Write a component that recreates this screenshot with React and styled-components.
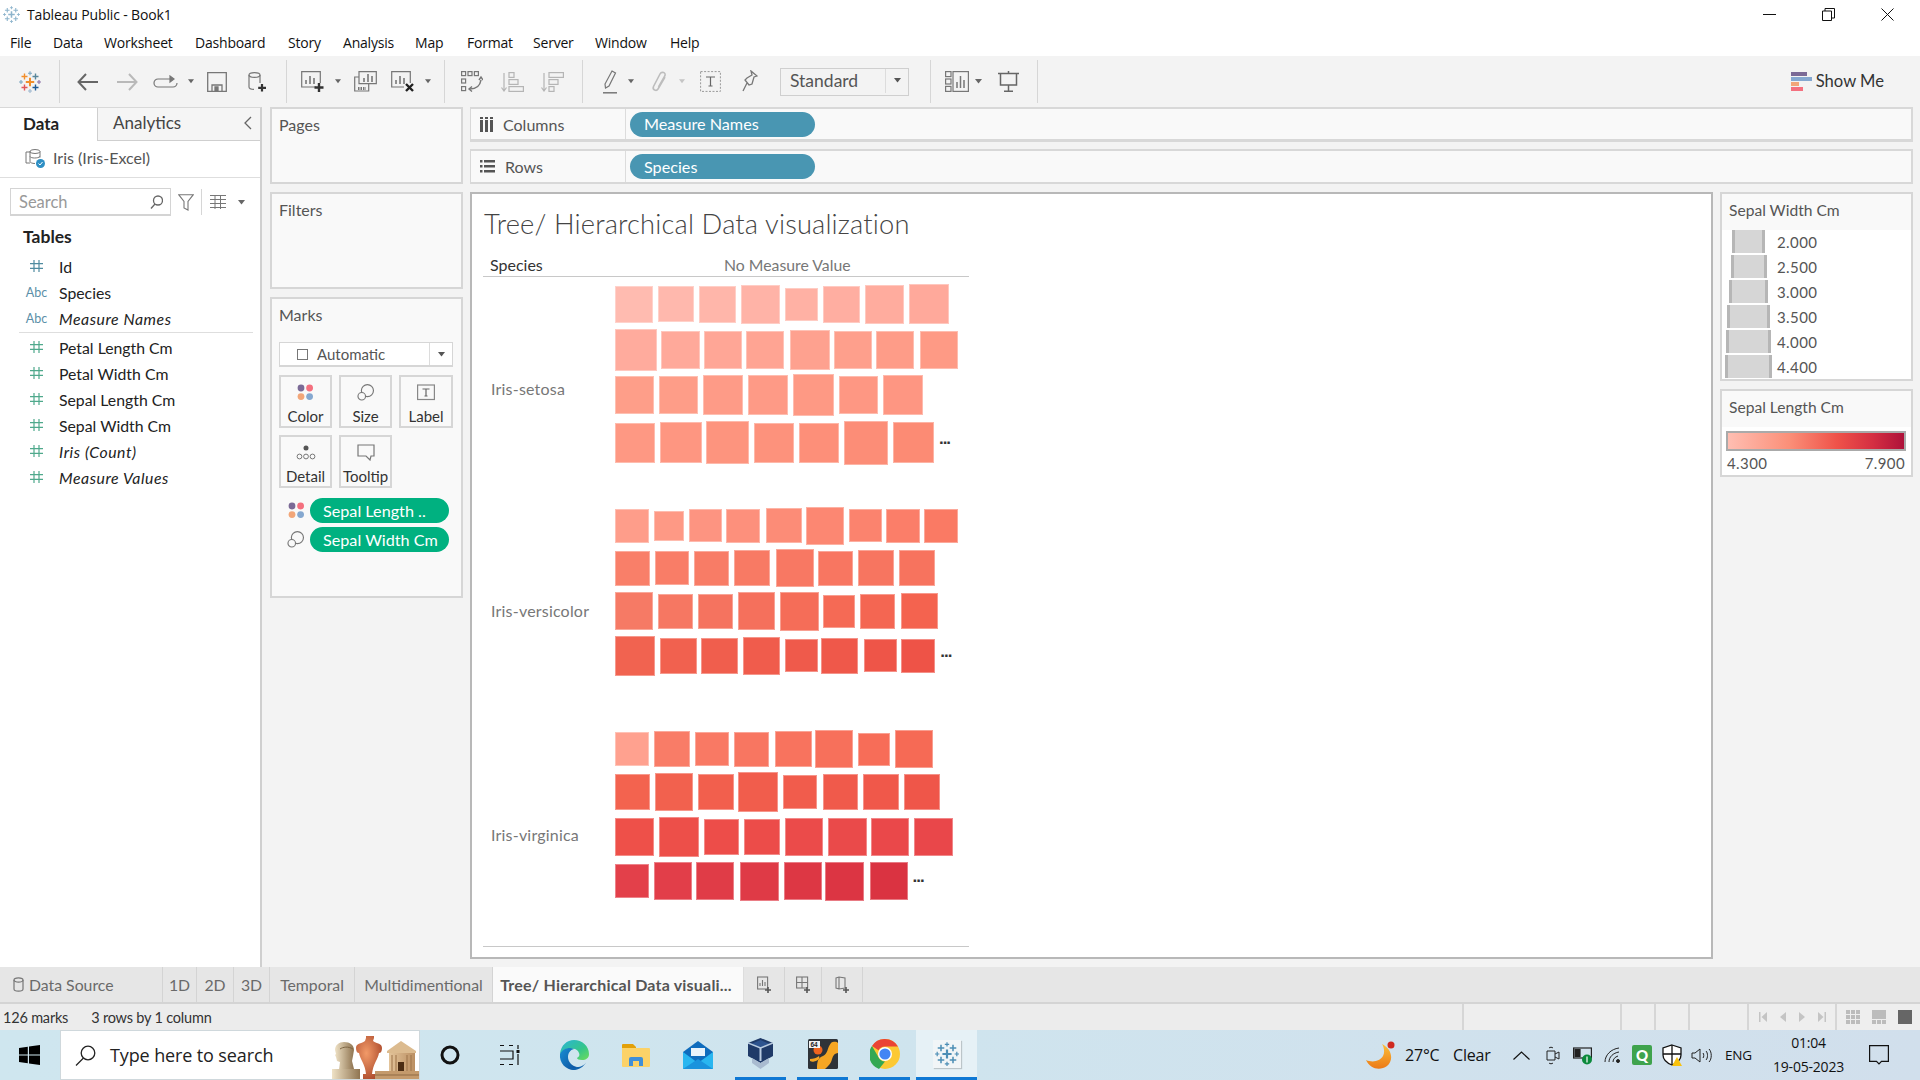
import React from "react";
import styled, { createGlobalStyle } from "styled-components";

const Global = createGlobalStyle`
  html, body { margin: 0; padding: 0; background: #fff; overflow: hidden; }
  #root { width: 1920px; height: 1080px; }
  * { box-sizing: border-box; }
`;
const UI = `"Lato", "Open Sans", sans-serif`;
const WIN = `"Open Sans", "Noto Sans", sans-serif`;

const Page = styled.div`
  width: 1920px; height: 1080px; display: flex; flex-direction: column; overflow: hidden;
  background: #f3f3f3; font-family: ${UI}; color: #333;
`;
/* ---------- window chrome ---------- */
const TitleBar = styled.div`
  height: 28px; background: #fff; display: flex; align-items: center; padding-left: 3px;
  font: 14px ${WIN}; color: #111; flex: none; letter-spacing: -0.15px;
`;
const TitleText = styled.span` margin-left: 7px; `;
const WindowButtons = styled.div` margin-left: auto; display: flex; margin-right: 26px; gap: 46px; align-items: center; `;
const MenuBar = styled.div`
  height: 28px; background: #fff; display: flex; align-items: center; flex: none;
  font: 14px ${WIN}; color: #111; letter-spacing: -0.2px; padding-left: 10px;
`;
const MenuItem = styled.span` width: ${p => p.$w}px; flex: none; `;

const Toolbar = styled.div`
  height: 51px; background: #f3f3f3; display: flex; align-items: center; flex: none; padding-left: 19px;
`;
const Tool = styled.span`
  display: inline-flex; align-items: center; justify-content: center; flex: none;
  width: ${p => p.$w}px; margin-left: ${p => p.$ml || 0}px;
`;
const Sep = styled.span` width: 1px; height: ${p => p.$h || 43}px; background: #d6d6d6; flex: none; margin-left: ${p => p.$ml}px; `;
const Select = styled.div`
  width: 129px; height: 28px; margin-left: 22px; border: 1px solid #cfcfcf; display: flex; flex: none; align-items: center;
  font: 17.5px ${UI}; color: #555; padding: 0 0 2px 9px;
`;
const SelectArrow = styled.span`
  margin-left: auto; width: 23px; height: 100%; border-left: 1px solid #dcdcdc; display: flex; align-items: center; justify-content: center;
`;
const ShowMe = styled.div`
  margin-left: auto; margin-right: 36px; display: flex; align-items: center; gap: 4px; font: 16.6px ${UI}; color: #333; line-height: 20px; padding-bottom: 1px;
`;
/* ---------- main ---------- */
const Main = styled.div` flex: 1; display: flex; min-height: 0; `;
const DataPane = styled.div`
  width: 262px; background: #fff; border-right: 2px solid #cfcfcf; border-top: 1px solid #d8d8d8; flex: none; display: flex; flex-direction: column;
`;
const TabRow = styled.div` display: flex; height: 33px; flex: none; `;
const PaneTab = styled.div`
  width: 97px; font: 700 17px ${UI}; color: #222; padding: 0 0 3px 23px;
  display: flex; align-items: center; background: #fff;
`;
const InactiveTab = styled.div`
  flex: 1; background: #f5f5f5; border-left: 1px solid #cfcfcf; border-bottom: 1px solid #cfcfcf;
  display: flex; align-items: center; padding: 0 8px 3px 15px; font: 17px ${UI}; color: #444; justify-content: space-between;
`;
const SourceRow = styled.div`
  height: 37px; display: flex; align-items: center; padding: 0 0 3px 25px; gap: 8px; border-bottom: 1px solid #dedede; font: 16px ${UI}; color: #555; flex: none;
`;
const SearchRow = styled.div` display: flex; align-items: center; margin: 10px 0 0 10px; height: 28px; flex: none; `;
const SearchBox = styled.div`
  width: 161px; height: 28px; border: 1px solid #d4d4d4; border-bottom-width: 2px; display: flex; align-items: center; justify-content: space-between;
  padding: 0 7px 0 8px; font: 16.5px ${UI}; color: #999;
`;
const Tables = styled.div` font: 700 17.5px ${UI}; color: #222; margin: 11px 0 6px 23px; height: 20px; line-height: 20px; flex: none; `;
const Field = styled.div`
  height: 26px; display: flex; align-items: center; font: ${p => p.$i ? "italic " : ""}15.8px ${UI}; letter-spacing: ${p => p.$i ? ".55px" : "0"}; color: #222; flex: none;
  padding-left: 26px;
`;
const FieldLabel = styled.span` margin-left: 12px; `;
const TypeIcon = styled.span`
  width: 21px; flex: none; font: 12.5px ${UI}; font-style: normal; letter-spacing: 0; color: ${p => p.$c}; display: inline-flex; justify-content: center;
`;
const FieldRule = styled.div` height: 1px; background: #dedede; margin: 1px 7px 1px 19px; flex: none; `;

const Cards = styled.div` width: 193px; margin-left: 8px; flex: none; display: flex; flex-direction: column; `;
const Card = styled.div`
  height: ${p => p.$h}px; margin-top: ${p => p.$mt || 0}px; border: 2px solid #d6d6d6; background: #f9f9f9; padding: 6px 0 0 7px; font: 16px ${UI}; color: #555; flex: none;
`;
const CardTitle = styled.div` height: 20px; line-height: 20px; `;
const MarkType = styled.div`
  width: 174px; height: 25px; margin: 17px 0 0 0; border: 1px solid #d6d6d6; border-bottom-width: 2px; background: #fff; display: flex; align-items: center;
  font: 15px ${UI}; color: #555; padding-left: 17px;
`;
const CheckBox = styled.span` width: 11px; height: 11px; border: 1px solid #777; flex: none; margin-right: 9px; `;
const MarkGrid = styled.div` display: grid; grid-template-columns: 53px 53px 54px; grid-auto-rows: 53px; gap: 7px 7px; margin-top: 8px; `;
const MarkBtn = styled.div`
  border: 2px solid #d6d6d6; display: flex; flex-direction: column; align-items: center; font: 15px ${UI}; color: #333; padding-top: 7px;
  line-height: 16px; gap: 7px; white-space: nowrap;
`;
const Pills = styled.div` margin-top: 10px; display: flex; flex-direction: column; gap: 4px; `;
const PillRow = styled.div` display: flex; align-items: center; padding-left: 8px; `;
const PillIcon = styled.span` width: 18px; margin-right: 5px; flex: none; display: inline-flex; justify-content: center; `;
const Pill = styled.div`
  width: ${p => p.$w}px; height: 25px; border-radius: 13px; background: ${p => p.$c}; color: #fff; display: flex; align-items: center;
  padding-left: ${p => p.$pl}px; font: 16.2px ${UI}; flex: none; white-space: nowrap; overflow: hidden; padding-bottom: 1px;
`;
const Workspace = styled.div` flex: none; width: 1443px; margin-left: 7px; display: flex; flex-direction: column; `;
const Shelf = styled.div`
  height: ${p => p.$h}px; margin-bottom: ${p => p.$mb}px; border: 2px solid #d8d8d8; border-bottom-width: ${p => p.$bb}px; border-left-width: 1px; background: #f9f9f9; display: flex; align-items: center; flex: none;
`;
const ShelfLabel = styled.div`
  width: 155px; height: 100%; border-right: 1px solid #dcdcdc; display: flex; align-items: center; padding-left: 9px; gap: 10px; font: 16px ${UI}; color: #555; margin-right: 4px;
`;
const ContentRow = styled.div` flex: 1; display: flex; gap: 7px; min-height: 0; `;
const Viz = styled.div`
  width: 1243px; height: 767px; border: 2px solid #b8b8b8; background: #fff; flex: none; padding: 0 0 0 11px;
`;
const VizTitle = styled.div`
  font: 300 27.3px ${UI}; color: #444; height: 63px; padding: 14px 0 0 1px; line-height: 32px; letter-spacing: 0.15px; white-space: nowrap;
`;
const VizTable = styled.div` width: 486px; `;
const VizHeader = styled.div`
  height: 18px; margin-bottom: 1px; border-bottom: 1px solid #c8c8c8; box-sizing: content-box; padding-bottom: 1px; display: grid; grid-template-columns: 242px 1fr; font: 16px ${UI};
  color: #333;
`;
const HeaderName = styled.div` padding-left: 7px; line-height: 16px; `;
const HeaderValue = styled.div` color: #777; font-size: 15.8px; line-height: 16px; margin-left: -1px; white-space: nowrap; `;
const PaneBlock = styled.div` height: ${p => p.$h}px; display: grid; grid-template-columns: 132px 1fr; `;
const SpeciesLabel = styled.div` display: flex; align-items: center; padding: 0 0 ${p => p.$pb}px 8px; font: 16px ${UI}; color: #777; letter-spacing: .2px; `;
const MarksCol = styled.div` display: flex; flex-direction: column; min-width: 0; `;
const MarkRow = styled.div` height: 44px; display: flex; align-items: center; flex: none; `;
const TreeMark = styled.div`
  flex: none; box-shadow: inset 0 0 0 1px rgba(255,255,255,.35);
`;
const More = styled.span` font: 700 17px/1 "Liberation Sans", sans-serif; color: #333; margin-left: 5px; padding-bottom: 9px; letter-spacing: -1px; `;
const VizFoot = styled.div` border-top: 1px solid #c8c8c8; `;
const Legends = styled.div` width: 193px; flex: none; display: flex; flex-direction: column; gap: 8px; `;
const Legend = styled.div` height: ${p => p.$h}px; border: 2px solid #d6d6d6; background: #fff; flex: none; `;
const LegendTitle = styled.div`
  height: ${p => p.$h}px; background: #f9f9f9; padding: 0 0 4px 7px; display: flex; align-items: center; font: 15.6px ${UI}; color: #555;
`;
const SizeList = styled.div` margin-top: -1px; `;
const SizeItem = styled.div` height: 25px; display: flex; align-items: center; font: 15px ${UI}; color: #555; letter-spacing: .4px; `;
const SwatchCell = styled.div` width: 55px; display: flex; justify-content: center; padding-right: 2px; flex: none; `;
const Swatch = styled.div` width: ${p => p.$w}px; height: 23px; background: #d6d6d6; border-left: 3px solid #b6b6b6; border-right: 3px solid #b6b6b6; `;
const Ramp = styled.div`
  height: 20px; margin: 4px 5px 0 4px; border: 2px solid #aaa; background: linear-gradient(90deg,#ffbeb2 0%,#fb8f78 35%,#ef5249 62%,#d52f42 82%,#ae123a 100%);
`;
const RampLabels = styled.div` display: flex; justify-content: space-between; margin: 3px 6px 0 5px; font: 15px ${UI}; color: #555; letter-spacing: .4px; `;
/* ---------- tabs / status ---------- */
const TabBar = styled.div` height: 37px; flex: none; background: #e6e6e6; display: flex; border-bottom: 2px solid #d4d4d4; `;
const SheetTab = styled.div`
  width: ${p => p.$w}px; flex: none; display: flex; align-items: center; justify-content: ${p => p.$left ? "flex-start" : "center"};
  border-right: 1px solid #d4d4d4; font: 15.8px ${UI}; color: #6a6a6a; gap: 5px; padding-left: ${p => p.$left ? 13 : 0}px; white-space: nowrap;
`;
const ActiveSheet = styled(SheetTab)` background: #fafafa; color: #555; font-weight: 700; font-size: 16px; border-right: 1px solid #ddd; letter-spacing: .2px; padding-right: 4px; `;
const StatusBar = styled.div` height: 26px; flex: none; background: #ececec; display: flex; align-items: center; font: 14.5px ${UI}; color: #333; `;
const StatusText = styled.span` margin-left: ${p => p.$ml}px; white-space: nowrap; letter-spacing: -.2px; `;
const StatusCell = styled.div`
  width: ${p => p.$w}px; height: 100%; border-left: 2px solid #d6d6d6; display: flex; align-items: center; justify-content: center; gap: ${p => p.$gap || 0}px; flex: none;
`;
const StatusRight = styled.div` margin-left: auto; display: flex; height: 100%; background: #eeeeee; `;
/* ---------- taskbar ---------- */
const Taskbar = styled.div`
  height: 50px; flex: none; background: linear-gradient(90deg,#cfe6ef 0%,#cfe4ee 50%,#d1dfec 100%); display: flex; align-items: center; font: 14px ${WIN}; color: #111;
`;
const StartCell = styled.div` width: 60px; height: 100%; display: flex; align-items: center; padding-left: 19px; flex: none; `;
const SearchBar = styled.div`
  width: 360px; height: 50px; background: #fff; border: 1px solid #cfd8dc; display: flex; align-items: center; padding-left: 14px; font: 18px ${WIN}; color: #222; position: relative; flex: none; overflow: hidden; letter-spacing: -.12px;
`;
const SearchArt = styled.span` position: absolute; right: 0; bottom: 0; display: flex; `;
const SearchText = styled.span` margin-left: 14px; `;
const TaskCell = styled.div`
  height: 50px; width: ${p => p.$w}px; margin-left: ${p => p.$ml || 0}px; flex: none; display: flex; align-items: center; justify-content: center;
  border-bottom: ${p => p.$run ? "3px solid #0f78d4" : "none"}; background: ${p => p.$act ? "#e6f1f6" : "transparent"}; padding-top: ${p => p.$run ? 1 : 0}px;
`;
const AppTile = styled.span`
  width: 28px; height: 28px; background: #f1f5f7; box-shadow: 1px 1px 1px rgba(0,0,0,.18); display: flex; align-items: center; justify-content: center;
`;
const TrayText = styled.span`
  margin-left: ${p => p.$ml}px; width: ${p => p.$w}px; flex: none; font-size: ${p => p.$fs || 16}px; white-space: nowrap; letter-spacing: -.2px;
`;
const Clock = styled.div` margin-left: 19px; width: 73px; flex: none; text-align: center; font-size: 14px; line-height: 24px; letter-spacing: -.2px; white-space: nowrap; `;

/* ---------- drawings ---------- */
const G = "#666";
const Cross = ({ x, y, s = 3, c, w = 1.4 }) => <path d={`M${x - s} ${y}H${x + s}M${x} ${y - s}V${y + s}`} stroke={c} strokeWidth={w} fill="none" />;
const TableauLogo = ({ size = 22, mono }) => (
  <svg width={size} height={size} viewBox="0 0 22 22">
    <Cross x={11} y={11} s={4.2} w={2} c={mono || "#f28e2b"} />
    <Cross x={5.5} y={5.5} s={3} c={mono || "#f28e2b"} />
    <Cross x={16.5} y={5.5} s={3} c={mono || "#59879b"} />
    <Cross x={5.5} y={16.5} s={3} c={mono || "#e15759"} />
    <Cross x={16.5} y={16.5} s={3} c={mono || "#1f5a96"} />
    <Cross x={11} y={2.2} s={2} w={1.1} c={mono || "#7aa6c2"} />
    <Cross x={2} y={11} s={2} w={1.1} c={mono || "#7aa6c2"} />
    <Cross x={20} y={11} s={2} w={1.1} c={mono || "#8a6fa5"} />
    <Cross x={11} y={20} s={2} w={1.1} c={mono || "#9db7cf"} />
  </svg>
);
const Caret = ({ c = "#666" }) => <svg width="7" height="5" viewBox="0 0 7 5"><path d="M0 0h7L3.5 4.5z" fill={c} /></svg>;
const Line = ({ w, h, children, sw = 1.3, c = G }) => <svg width={w} height={h} viewBox={`0 0 ${w} ${h}`} fill="none" stroke={c} strokeWidth={sw}>{children}</svg>;
const Bars = ({ x = 5, y = 13, c = G }) => <path d={`M${x} ${y}v-4M${x + 4} ${y}v-8M${x + 8} ${y}v-6`} stroke={c} strokeWidth="1.4" />;
const Hash = ({ c = "#4f9d8a" }) => <svg width="13" height="14" viewBox="0 0 13 14" stroke={c} strokeWidth="1.2" fill="none"><path d="M4 1v12M9 1v12M0 4.7h13M0 9.3h13" /></svg>;
const Palette = () => <svg width="17" height="17" viewBox="0 0 17 17"><circle cx="4" cy="4" r="3.4" fill="#7b6a96" /><circle cx="12.6" cy="4" r="3.4" fill="#f4707f" /><circle cx="4" cy="12.6" r="3.4" fill="#f2a679" /><circle cx="12.6" cy="12.6" r="3.4" fill="#85a8d0" /></svg>;
const SizeGlyph = () => <svg width="18" height="17" viewBox="0 0 19 18" fill="none" stroke="#777" strokeWidth="1.2"><circle cx="11" cy="7" r="6.4" /><circle cx="5" cy="13" r="4" fill="#f9f9f9" /></svg>;
const NewSheet = ({ kind }) => (
  <svg width="14" height="18" viewBox="0 0 14 18" fill="none" stroke="#777" strokeWidth="1.1">
    {kind === 0 && <><rect x=".6" y="1" width="10" height="12" /><path d="M3 10V7M5.5 10V4M8 10V6" /></>}
    {kind === 1 && <><rect x=".6" y="1" width="11" height="11" /><path d="M.6 6.5h11M6 1v11" /></>}
    {kind === 2 && <path d="M1 2l3-1 6 1v10l-6 1-3-1zM4 1v12" />}
    <path d="M11 11v6M8 14h6" stroke="#555" strokeWidth="1.6" />
  </svg>
);
const Edge = () => (
  <svg width="30" height="30" viewBox="0 0 30 30">
    <defs>
      <linearGradient id="eg" x1="0" y1="0" x2="1" y2="1"><stop offset="0" stopColor="#2ab4d8" /><stop offset=".6" stopColor="#35c68a" /><stop offset="1" stopColor="#6fdc5a" /></linearGradient>
      <linearGradient id="eb" x1="0" y1="0" x2="1" y2="1"><stop offset="0" stopColor="#1b8fd4" /><stop offset="1" stopColor="#0b4f9c" /></linearGradient>
    </defs>
    <path d="M1 14C2 5 8 0 15 0c8 0 15 6 15 14 0 4-3 6-7 6-3 0-5-1-5-2 2-1 3-3 2-5-1-3-4-5-8-4-5 1-9 3-11 5z" fill="url(#eg)" />
    <path d="M1 14c2-4 6-6 10-6 2 0 3 1 4 1-4 1-6 4-6 8 0 5 4 9 9 10-1 1-2 3-3 3C7 30 0 23 1 14z" fill="url(#eb)" />
    <path d="M18 27c4 0 8-2 10-6-2 4-6 8-12 9-2 0-4-1-5-2 2 0 5 0 7-1z" fill="#0e62ae" />
  </svg>
);
const Folder = () => (
  <svg width="28" height="23" viewBox="0 0 28 23">
    <path d="M0 1a1 1 0 011-1h10l3 3v4H0z" fill="#e3a008" />
    <path d="M0 4h27a1 1 0 011 1v17a1 1 0 01-1 1H1a1 1 0 01-1-1z" fill="#fcd268" />
    <path d="M7 22v-7a2 2 0 012-2h10a2 2 0 012 2v7h-4v-5h-6v5z" fill="#3f8fd8" />
  </svg>
);
const Mail = () => (
  <svg width="30" height="28" viewBox="0 0 30 28">
    <path d="M15 0l15 11v17H0V11z" fill="#0f6cbd" />
    <path d="M8 7h14v8H8z" fill="#e9f3fb" />
    <path d="M0 11l15 11 15-11v17H0z" fill="#29b6f0" />
    <path d="M0 28l15-10 15 10z" fill="#1a93dd" />
  </svg>
);
const VBox = () => (
  <svg width="25" height="32" viewBox="0 0 25 32">
    <path d="M12.5 0L25 5v13l-12.500 7L0 18V5z" fill="#1f3a68" />
    <path d="M12.5 2L22 6l-9.500 4L3 6z" fill="#2e548f" />
    <path d="M12.5 10v13" stroke="#b9cbe0" strokeWidth="2" />
    <path d="M0 5l12.500 5L25 5" stroke="#b9cbe0" strokeWidth="1.500" fill="none" />
    <path d="M4 20l8.500 5 8.500-5v5l-8.500 6L4 25z" fill="#a9bbd0" />
  </svg>
);
const Octave = () => (
  <svg width="30" height="30" viewBox="0 0 30 30">
    <rect width="30" height="30" rx="1.500" fill="#2f3338" />
    <path d="M9 30c0-8 1-11 6-13 5-2 4-8 8-13 3-2 6-1 7 0v10c-3 0-5 2-6 6-1 5-4 7-7 10z" fill="#f6a623" />
    <path d="M2 20c3 0 7-1 9-3 1 2 0 4-3 5-3 1-4 1-6 0z" fill="#f6a623" />
    <circle cx="10" cy="11" r="4.500" fill="#f0641e" />
    <rect x="1" y="2" width="11" height="7" fill="#f2f2f2" />
    <text x="2.500" y="8" fontFamily="Liberation Sans" fontWeight="700" fontSize="6.500" fill="#222">64</text>
  </svg>
);
const Chrome = () => (
  <svg width="30" height="30" viewBox="0 0 30 30">
    <circle cx="15" cy="15" r="15" fill="#fcc934" />
    <path d="M15 0a15 15 0 0113 7.500H15a7.500 7.500 0 00-6.500 3.750L2 7A15 15 0 0115 0z" fill="#ea4335" />
    <path d="M2 7l6.500 11.250A7.500 7.500 0 0015 22.500L9 30A15 15 0 012 7z" fill="#34a853" />
    <circle cx="15" cy="15" r="7" fill="#fff" /><circle cx="15" cy="15" r="5.600" fill="#4285f4" />
  </svg>
);
const SearchPicture = () => (
  <svg width="87" height="43" viewBox="0 0 87 43">
    <defs>
      <linearGradient id="st" x1="0" x2="1"><stop offset="0" stopColor="#efe2c6" /><stop offset="1" stopColor="#8f7450" /></linearGradient>
      <radialGradient id="va" cx=".4" cy=".4" r=".7"><stop offset="0" stopColor="#f29a68" /><stop offset="1" stopColor="#a9482a" /></radialGradient>
      <linearGradient id="te" x1="0" x2="1"><stop offset="0" stopColor="#e3c49a" /><stop offset="1" stopColor="#bb8f62" /></linearGradient>
    </defs>
    <path d="M0 43V33h28v10z" fill="url(#st)" />
    <path d="M3 14C3 9 7 6 12 6c6 0 10 3 10 8l-1 6-1 5 2 8H7l1-7-3-1-1-4-1-2 1-1z" fill="url(#st)" />
    <path d="M8 13c3-2 8-3 13 0" stroke="#7d6544" fill="none" />
    <path d="M34 0h8v2l-1 3c4 3 9 2 9 7 0 3-1 5-3 5-1 6-6 11-7 21h3v5H31v-5h3c-1-10-6-15-7-21-2 0-3-2-3-5 0-5 5-4 9-7l1-3z" fill="url(#va)" />
    <path d="M55 15L69 5l15 10v2H55z" fill="#dcbb8f" />
    <path d="M57 17h26v19H57z" fill="url(#te)" />
    <path d="M60 19v17M64 19v17M75 19v17M79 19v17" stroke="#9c7348" />
    <path d="M66 26h6v10h-6z" fill="#4b2d14" />
    <path d="M43 35h44v8H43z" fill="#c49a6c" />
    <path d="M43 39h44" stroke="#8f6a44" />
  </svg>
);
const Moon = () => (
  <svg width="29" height="29" viewBox="0 0 29 29">
    <defs><linearGradient id="mn" x1="0" y1="0" x2="0" y2="1"><stop offset="0" stopColor="#fbbf3a" /><stop offset="1" stopColor="#ec7a17" /></linearGradient></defs>
    <path d="M16 3c10 5 12 16 5 22-7 5-17 3-21-6 7 3 14 1 17-4 2-4 1-9-1-12z" fill="url(#mn)" />
    <circle cx="25" cy="4" r="3.500" fill="#cf2a20" />
  </svg>
);

/* ---------- data ---------- */
const hex = h => [1, 3, 5].map(i => parseInt(h.slice(i, i + 2), 16));
const mix = (a, b, t) => { const A = hex(a), B = hex(b); return `rgb(${A.map((v, i) => Math.round(v + (B[i] - v) * t)).join(",")})`; };
const PANES = [
  { name: "Iris-setosa", top: 278, h: 224, pb: 3, rows: [
    { cy: 304.3, c: ["#ffbbb0", "#ffa99b"], m: [[406,519,112],[534,643,109],[658,770,112],[785,902,116],[916,1014,98],[1029,1142,112],[1157,1273,116],[1287,1408,120]] },
    { cy: 350, c: ["#ffab9d", "#fe9a85"], m: [[406,531,124],[545,662,116],[673,786,112],[800,913,112],[931,1052,120],[1062,1176,112],[1190,1304,112],[1321,1434,112]] },
    { cy: 395, c: ["#fe9e89", "#fe9682"], m: [[406,523,116],[537,654,116],[669,789,120],[804,925,120],[939,1063,124],[1077,1194,116],[1209,1329,120]] },
    { cy: 442.7, c: ["#fe9883", "#fc8b74"], more: 1, m: [[406,527,120],[541,666,124],[680,808,128],[822,943,120],[957,1078,120],[1092,1224,132],[1239,1363,124]] },
  ]},
  { name: "Iris-versicolor", top: 502, h: 220, pb: 3, rows: [
    { cy: 525.7, c: ["#fe9d8a", "#fa7a64"], m: [[406,508,102],[522,613,91],[627,726,98],[740,842,102],[860,966,106],[980,1093,113],[1107,1206,98],[1220,1322,102],[1333,1434,102]] },
    { cy: 568.3, c: ["#f97f69", "#f7735e"], m: [[406,512,106],[526,628,102],[642,748,106],[762,872,109],[890,1003,113],[1014,1120,106],[1134,1243,109],[1257,1367,109]] },
    { cy: 611.3, c: ["#f67a65", "#f4634f"], m: [[406,519,113],[534,639,106],[654,759,106],[774,887,113],[901,1018,117],[1029,1127,98],[1141,1247,106],[1265,1374,109]] },
    { cy: 655.7, c: ["#f16350", "#ee5347"], more: 1, m: [[406,527,120],[541,651,109],[665,774,109],[789,902,113],[916,1014,98],[1025,1135,109],[1152,1251,98],[1265,1367,102]] },
  ]},
  { name: "Iris-virginica", top: 722, h: 224, pb: 0, rows: [
    { cy: 749.3, c: ["#fa7f6a", "#f66a55"], first: "#ffa18f", m: [[406,508,102],[522,632,109],[646,748,102],[762,868,106],[886,996,109],[1006,1119,113],[1134,1232,98],[1246,1359,113]] },
    { cy: 792, c: ["#f3634f", "#ef5649"], m: [[406,512,106],[526,639,113],[654,763,109],[774,894,120],[909,1011,102],[1029,1135,106],[1149,1258,109],[1272,1382,109]] },
    { cy: 837, c: ["#ee5049", "#e9474a"], m: [[406,523,116],[537,658,120],[672,778,106],[792,902,109],[916,1029,113],[1044,1161,116],[1175,1288,113],[1303,1419,116]] },
    { cy: 881.3, c: ["#e3404a", "#da3341"], more: 1, m: [[406,508,102],[522,636,113],[650,763,113],[781,898,117],[912,1026,113],[1037,1153,117],[1171,1284,113]] },
  ]},
];
const MENUS = [["File", 43], ["Data", 51], ["Worksheet", 91], ["Dashboard", 93], ["Story", 55], ["Analysis", 72], ["Map", 52], ["Format", 66], ["Server", 62], ["Window", 75], ["Help", 40]];
const FIELDS_A = [["Id", "#"], ["Species", "A"], ["Measure Names", "A", 1]];
const FIELDS_B = [["Petal Length Cm"], ["Petal Width Cm"], ["Sepal Length Cm"], ["Sepal Width Cm"], ["Iris (Count)", "#", 1], ["Measure Values", "#", 1]];
const SIZES = [["2.000", 33], ["2.500", 36], ["3.000", 39], ["3.500", 43], ["4.000", 45], ["4.400", 47]];

const FieldRow = ({ name, kind, italic }) => (
  <Field $i={italic}>
    {kind === "A"
      ? <TypeIcon $c="#5b8fa8">Abc</TypeIcon>
      : <TypeIcon $c="#4f9d8a"><Hash c={name === "Id" ? "#4f8ba0" : "#4fa98c"} /></TypeIcon>}
    <FieldLabel>{name}</FieldLabel>
  </Field>
);

export default function App() {
  return (
    <Page>
      <Global />
      <TitleBar>
        <TableauLogo size={17} mono="#8db4cc" />
        <TitleText>Tableau Public - Book1</TitleText>
        <WindowButtons>
          <Line w={13} h={13} c="#111" sw={1}><path d="M0 6.5h13" /></Line>
          <Line w={13} h={13} c="#111" sw={1}><path d="M.5 3h9v9.5h-9zM3 3V.5h9.5V10H9.5" /></Line>
          <Line w={13} h={13} c="#111" sw={1}><path d="M.5.5l12 12M12.5.5l-12 12" /></Line>
        </WindowButtons>
      </TitleBar>
      <MenuBar>
        {MENUS.map(([m, w]) => <MenuItem key={m} $w={w}>{m}</MenuItem>)}
      </MenuBar>
      <Toolbar>
        <Tool $w={22}><TableauLogo /></Tool>
        <Sep $ml={18} />
        <Tool $w={21} $ml={17}><Line w={21} h={18} sw={2} c="#666"><path d="M21 9H2M9 1L1.5 9 9 17" /></Line></Tool>
        <Tool $w={21} $ml={19}><Line w={21} h={18} sw={2} c="#b9b9b9"><path d="M0 9h19M12 1l7.5 8-7.500 8" /></Line></Tool>
        <Tool $w={25} $ml={15}><Line w={25} h={14} sw={1.2} c="#777"><path d="M17 4H5a4 4 0 000 8h15a4 4 0 004-4" /><path d="M17 1v6l4-3z" fill="#777" /></Line></Tool>
        <Tool $w={6} $ml={10}><Caret /></Tool>
        <Tool $w={20} $ml={13}><Line w={20} h={20} sw={1.3} c="#777"><path d="M.7.7h18.6v18.6H.7zM5 19v-6h10v6" /><path d="M8 15h3v4H8z" fill="#777" /></Line></Tool>
        <Tool $w={19} $ml={21}>
          <svg width="19" height="20" viewBox="0 0 19 20" fill="none" stroke="#777" strokeWidth="1.2"><ellipse cx="6.5" cy="3" rx="5.5" ry="2.400" /><path d="M1 3v12c0 1.500 1.500 2.400 5 2.400M12 3v8" /><path d="M14 12v7.500M10.200 15.800h7.800" stroke="#333" strokeWidth="2.200" /></svg>
        </Tool>
        <Sep $ml={19} />
        <Tool $w={23} $ml={14}>
          <svg width="23" height="21" viewBox="0 0 23 21" fill="none" stroke="#777" strokeWidth="1.2"><path d="M15 16H.7V.7h18.6V12" /><Bars x={5} y={13} /><path d="M18 12v9M13.500 16.500h9" stroke="#333" strokeWidth="2.400" /></svg>
        </Tool>
        <Tool $w={6} $ml={11}><Caret /></Tool>
        <Tool $w={23} $ml={13}>
          <svg width="23" height="21" viewBox="0 0 23 21" fill="none" stroke="#777" strokeWidth="1.2"><path d="M5 .7h17.300v12H5zM5 6H.7v14h14v-7" /><Bars x={10} y={11} /><path d="M4 17.500h8" strokeDasharray="1.500 1" strokeWidth="3" /></svg>
        </Tool>
        <Tool $w={23} $ml={14}>
          <svg width="23" height="21" viewBox="0 0 23 21" fill="none" stroke="#777" strokeWidth="1.2"><path d="M13 16H.7V.7h18.6V12" /><Bars x={5} y={13} /><path d="M15 13l7 7M22 13l-7 7" stroke="#222" strokeWidth="2.400" /></svg>
        </Tool>
        <Tool $w={6} $ml={11}><Caret /></Tool>
        <Sep $ml={13} />
        <Tool $w={22} $ml={16}>
          <svg width="22" height="21" viewBox="0 0 22 21" fill="none" stroke="#777" strokeWidth="1.2"><rect x=".6" y=".6" width="4" height="4" /><rect x="7" y=".6" width="4" height="4" /><rect x="13.400" y=".6" width="4" height="4" /><rect x=".6" y="8" width="4" height="4" /><rect x=".6" y="15.600" width="4" height="4" /><path d="M9 18c6 0 10-3 11-9" strokeWidth="1.500" /><path d="M18 9l2-3 2 3M11 15.500L8 18l3 2.500" strokeWidth="1.400" /></svg>
        </Tool>
        <Tool $w={23} $ml={18}>
          <svg width="23" height="20" viewBox="0 0 23 20" fill="none" stroke="#b5b5b5" strokeWidth="1.2"><path d="M3 1v17M.5 15.500L3 19l2.500-3.500" /><rect x="8" y=".6" width="5" height="4.800" /><rect x="8" y="7.600" width="9" height="4.800" /><rect x="8" y="14.600" width="14.400" height="4.800" /></svg>
        </Tool>
        <Tool $w={23} $ml={17}>
          <svg width="23" height="20" viewBox="0 0 23 20" fill="none" stroke="#b5b5b5" strokeWidth="1.2"><path d="M3 1v17M.5 15.500L3 19l2.500-3.500" /><rect x="8" y=".6" width="14.400" height="4.800" /><rect x="8" y="7.600" width="9" height="4.800" /><rect x="8" y="14.600" width="5" height="4.800" /></svg>
        </Tool>
        <Sep $ml={18} />
        <Tool $w={14} $ml={20}>
          <svg width="14" height="24" viewBox="0 0 14 24" fill="none" stroke="#777" strokeWidth="1.2"><path d="M9 1l3.500 2L6 16l-3.500 2L2 14z" /><path d="M0 22.800h14" strokeWidth="1.500" /></svg>
        </Tool>
        <Tool $w={6} $ml={11}><Caret /></Tool>
        <Tool $w={16} $ml={17}>
          <svg width="16" height="23" viewBox="0 0 16 23" fill="none" stroke="#bdbdbd" strokeWidth="1.600"><path d="M14 7L7 19c-1.500 2.500-6 1-4.500-2.500L9 4c1.500-3 6.500-1.500 4.800 2L7.500 17" /></svg>
        </Tool>
        <Tool $w={6} $ml={12}><Caret c="#c5c5c5" /></Tool>
        <Tool $w={21} $ml={15}>
          <svg width="21" height="21" viewBox="0 0 21 21" fill="none"><rect x=".6" y=".6" width="19.800" height="19.800" stroke="#999" strokeDasharray="2 1.500" /><path d="M6 6h9M10.500 6v9M8.500 15h4" stroke="#666" strokeWidth="1.200" /></svg>
        </Tool>
        <Tool $w={16} $ml={21}>
          <svg width="16" height="23" viewBox="0 0 16 23" fill="none" stroke="#777" strokeWidth="1.300"><path d="M9 1l6 5-3 1-2 7-3 1-4-5 2-2 5-3zM5 13l-4 8" /></svg>
        </Tool>
        <Select>
          Standard
          <SelectArrow><Caret c="#555" /></SelectArrow>
        </Select>
        <Sep $ml={21} />
        <Tool $w={24} $ml={14}>
          <svg width="24" height="21" viewBox="0 0 24 21" fill="none" stroke="#777" strokeWidth="1.200"><rect x=".6" y=".6" width="5.400" height="5" /><rect x=".6" y="8" width="5.400" height="5" /><rect x=".6" y="15.400" width="5.400" height="5" /><rect x="8" y=".6" width="15.400" height="19.800" /><path d="M12 17v-6M15.500 17V5M19 17V9" strokeWidth="1.500" /></svg>
        </Tool>
        <Tool $w={7} $ml={6}><Caret /></Tool>
        <Tool $w={21} $ml={16}>
          <svg width="21" height="21" viewBox="0 0 21 21" fill="none" stroke="#666" strokeWidth="1.500"><path d="M0 2.500h21M10.500 0v2.500M2.500 2.500V14h16V2.500M10.500 14v6M6 20.300h9" /></svg>
        </Tool>
        <Sep $ml={18} />
        <ShowMe>
          <svg width="21" height="19" viewBox="0 0 21 19"><rect width="16" height="4" fill="#7b6a96" /><rect y="5" width="21" height="4" fill="#85a8d0" /><rect y="10" width="8" height="4" fill="#f2a679" /><rect y="15" width="12" height="4" fill="#f4707f" /></svg>
          Show Me
        </ShowMe>
      </Toolbar>
      <Main>
        <DataPane>
          <TabRow>
            <PaneTab>Data</PaneTab>
            <InactiveTab>
              Analytics
              <Line w={8} h={14} sw={1.300} c="#666"><path d="M7 1L1 7l6 6" /></Line>
            </InactiveTab>
          </TabRow>
          <SourceRow>
            <svg width="20" height="20" viewBox="0 0 20 20" fill="none" stroke="#777" strokeWidth="1"><path d="M1 4h5M1 4v11h4" /><ellipse cx="10" cy="3.500" rx="5" ry="2" /><path d="M5 3.500v10c0 1 2 2 5 2M15 3.500v6M5 8.500c1 2 8 2 10 0" /><circle cx="15.500" cy="15.500" r="4.500" fill="#2e8fc4" stroke="none" /><path d="M13.500 15.500l1.500 1.500 2.500-3" stroke="#fff" /></svg>
            Iris (Iris-Excel)
          </SourceRow>
          <SearchRow>
            <SearchBox>
              Search
              <Line w={13} h={14} sw={1.300} c="#666"><circle cx="8" cy="5.500" r="4.500" /><path d="M5 9l-4 4.500" /></Line>
            </SearchBox>
            <Tool $w={16} $ml={7}><Line w={16} h={17} sw={1.100} c="#777"><path d="M.7.7h14.600L10 7.500V16l-4-2V7.500z" /></Line></Tool>
            <Sep $ml={7} $h={26} />
            <Tool $w={16} $ml={8}>
              <svg width="16" height="14" viewBox="0 0 16 14" fill="none" stroke="#777"><path d="M0 .5h16M0 4.500h16M0 8.500h16M0 12.500h16M5 0v14M10.500 0v14" /></svg>
            </Tool>
            <Tool $w={8} $ml={11}><Caret /></Tool>
          </SearchRow>
          <Tables>Tables</Tables>
          {FIELDS_A.map(([n, k, i]) => <FieldRow key={n} name={n} kind={k} italic={i} />)}
          <FieldRule />
          {FIELDS_B.map(([n, k, i]) => <FieldRow key={n} name={n} kind={k} italic={i} />)}
        </DataPane>
        <Cards>
          <Card $h={77}><CardTitle>Pages</CardTitle></Card>
          <Card $h={97} $mt={8}><CardTitle>Filters</CardTitle></Card>
          <Card $h={301} $mt={8}>
            <CardTitle>Marks</CardTitle>
            <MarkType>
              <CheckBox />
              Automatic
              <SelectArrow><Caret c="#555" /></SelectArrow>
            </MarkType>
            <MarkGrid>
              <MarkBtn><Palette />Color</MarkBtn>
              <MarkBtn><SizeGlyph />Size</MarkBtn>
              <MarkBtn>
                <svg width="18" height="17" viewBox="0 0 18 17" fill="none" stroke="#888" strokeWidth="1.200"><rect x=".6" y="1" width="16.800" height="14.500" /><path d="M5.500 5h7M9 5v7M7.500 12h3" stroke="#666" /></svg>
                Label
              </MarkBtn>
              <MarkBtn>
                <svg width="20" height="17" viewBox="0 0 20 17" fill="none" stroke="#777" strokeWidth="1"><circle cx="10" cy="4" r="2.500" fill="#555" stroke="none" /><circle cx="3.500" cy="12.500" r="2.400" /><circle cx="10" cy="12.500" r="2.400" /><circle cx="16.500" cy="12.500" r="2.400" /></svg>
                Detail
              </MarkBtn>
              <MarkBtn>
                <svg width="18" height="17" viewBox="0 0 18 17" fill="none" stroke="#777" strokeWidth="1.200"><path d="M1 1h16v11h-3l-1 4-4-4H1z" /></svg>
                Tooltip
              </MarkBtn>
            </MarkGrid>
            <Pills>
              <PillRow><PillIcon><Palette /></PillIcon><Pill $w={139} $c="#00b180" $pl={13}>Sepal Length ..</Pill></PillRow>
              <PillRow><PillIcon><SizeGlyph /></PillIcon><Pill $w={139} $c="#00b180" $pl={13}>Sepal Width Cm</Pill></PillRow>
            </Pills>
          </Card>
        </Cards>
        <Workspace>
          <Shelf $h={35} $mb={7} $bb={3}>
            <ShelfLabel>
              <svg width="13" height="15" viewBox="0 0 13 15" fill="#555"><path d="M0 3h3v12H0zM5 3h3v12H5zM10 3h3v12h-3zM0 0h3v2H0zM5 0h3v2H5zM10 0h3v2h-3z" /></svg>
              Columns
            </ShelfLabel>
            <Pill $w={185} $c="#4996b2" $pl={14}>Measure Names</Pill>
          </Shelf>
          <Shelf $h={35} $mb={8} $bb={2}>
            <ShelfLabel>
              <svg width="15" height="13" viewBox="0 0 15 13" fill="#555"><path d="M0 0h2.500v2.500H0zM4 0h11v2.500H4zM0 5h2.500v2.500H0zM4 5h11v2.500H4zM0 10h2.500v2.500H0zM4 10h11v2.500H4z" /></svg>
              Rows
            </ShelfLabel>
            <Pill $w={185} $c="#4996b2" $pl={14}>Species</Pill>
          </Shelf>
          <ContentRow>
            <Viz>
              <VizTitle>Tree/ Hierarchical Data visualization</VizTitle>
              <VizTable>
                <VizHeader>
                  <HeaderName>Species</HeaderName>
                  <HeaderValue>No Measure Value</HeaderValue>
                </VizHeader>
                {PANES.map(p => (
                  <PaneBlock key={p.name} $h={p.h}>
                    <SpeciesLabel $pb={p.pb}>{p.name}</SpeciesLabel>
                    <MarksCol>
                      {p.rows.map((r, ri) => {
                        const marginTop = ri === 0 ? r.cy - 22 - p.top : r.cy - p.rows[ri - 1].cy - 44;
                        return (
                          <MarkRow key={ri} style={{ marginTop }}>
                            {r.m.map(([x0, x1, h], i) => (
                              <TreeMark
                                key={i}
                                style={{
                                  width: (x1 - x0) / 3,
                                  height: h / 3,
                                  marginLeft: i === 0 ? 0 : (x0 - r.m[i - 1][1]) / 3,
                                  background: i === 0 && r.first ? r.first : mix(r.c[0], r.c[1], i / (r.m.length - 1)),
                                }}
                              />
                            ))}
                            {r.more ? <More>...</More> : null}
                          </MarkRow>
                        );
                      })}
                    </MarksCol>
                  </PaneBlock>
                ))}
                <VizFoot />
              </VizTable>
            </Viz>
            <Legends>
              <Legend $h={189}>
                <LegendTitle $h={36}>Sepal Width Cm</LegendTitle>
                <SizeList>
                  {SIZES.map(([v, w]) => (
                    <SizeItem key={v}>
                      <SwatchCell><Swatch $w={w} /></SwatchCell>
                      {v}
                    </SizeItem>
                  ))}
                </SizeList>
              </Legend>
              <Legend $h={88}>
                <LegendTitle $h={36}>Sepal Length Cm</LegendTitle>
                <Ramp />
                <RampLabels><span>4.300</span><span>7.900</span></RampLabels>
              </Legend>
            </Legends>
          </ContentRow>
        </Workspace>
      </Main>
      <TabBar>
        <SheetTab $w={163} $left>
          <svg width="11" height="15" viewBox="0 0 11 15" fill="none" stroke="#777" strokeWidth="1.200"><ellipse cx="5.500" cy="3" rx="4.500" ry="2.200" /><path d="M1 3v9c0 1.200 2 2.200 4.500 2.200S10 13.200 10 12V3" /></svg>
          Data Source
        </SheetTab>
        <SheetTab $w={34}>1D</SheetTab>
        <SheetTab $w={37}>2D</SheetTab>
        <SheetTab $w={36}>3D</SheetTab>
        <SheetTab $w={85}>Temporal</SheetTab>
        <SheetTab $w={138}>Multidimentional</SheetTab>
        <ActiveSheet $w={251}>Tree/ Hierarchical Data visuali...</ActiveSheet>
        <SheetTab $w={41}><NewSheet kind={0} /></SheetTab>
        <SheetTab $w={37}><NewSheet kind={1} /></SheetTab>
        <SheetTab $w={41}><NewSheet kind={2} /></SheetTab>
      </TabBar>
      <StatusBar>
        <StatusText $ml={3}>126 marks</StatusText>
        <StatusText $ml={23}>3 rows by 1 column</StatusText>
        <StatusRight>
          <StatusCell $w={158} />
          <StatusCell $w={34} />
          <StatusCell $w={34} />
          <StatusCell $w={59} />
          <StatusCell $w={88} $gap={13}>
            <svg width="8" height="10" viewBox="0 0 8 10" fill="#c4c4c4"><path d="M0 0h1.500v10H0zM8 0v10L2.500 5z" /></svg>
            <svg width="6" height="10" viewBox="0 0 6 10" fill="#c4c4c4"><path d="M6 0v10L0 5z" /></svg>
            <svg width="6" height="10" viewBox="0 0 6 10" fill="#c4c4c4"><path d="M0 0v10l6-5z" /></svg>
            <svg width="8" height="10" viewBox="0 0 8 10" fill="#c4c4c4"><path d="M8 0H6.500v10H8zM0 0v10l5.500-5z" /></svg>
          </StatusCell>
          <StatusCell $w={85} $gap={12}>
            <svg width="14" height="14" viewBox="0 0 14 14" fill="#bcbcbc"><path d="M0 0h4v4H0zM5 0h4v4H5zM10 0h4v4h-4zM0 5h4v4H0zM5 5h4v4H5zM10 5h4v4h-4zM0 10h4v4H0zM5 10h4v4H5zM10 10h4v4h-4z" /></svg>
            <svg width="14" height="14" viewBox="0 0 14 14" fill="#bcbcbc"><path d="M0 0h14v9H0zM0 10h4v4H0zM5 10h4v4H5zM10 10h4v4h-4z" /></svg>
            <svg width="14" height="14" viewBox="0 0 14 14" fill="#666"><path d="M0 0h14v14H0z" /></svg>
          </StatusCell>
        </StatusRight>
      </StatusBar>
      <Taskbar>
        <StartCell>
          <svg width="21" height="20" viewBox="0 0 21 20" fill="#000"><path d="M0 3l8.800-1.300v7.800H0zM10 1.500L21 0v9.500H10zM0 10.500h8.800v7.800L0 17zM10 10.500h11V20l-11-1.500z" /></svg>
        </StartCell>
        <SearchBar>
          <Line w={21} h={21} sw={1.300} c="#222"><circle cx="13" cy="8" r="6.800" /><path d="M8.500 13L1 20.500" /></Line>
          <SearchText>Type here to search</SearchText>
          <SearchArt><SearchPicture /></SearchArt>
        </SearchBar>
        <TaskCell $w={60}><svg width="20" height="20" viewBox="0 0 20 20" fill="none"><circle cx="10" cy="10" r="8" stroke="#111" strokeWidth="3" /></svg></TaskCell>
        <TaskCell $w={60}><svg width="20" height="20" viewBox="0 0 20 20" fill="none" stroke="#111" strokeWidth="1.200"><path d="M0 .5h4M9 .5h4M0 6h13v8H0M0 19.500h4M9 19.500h4M18 0v4M18 9v11" /><rect x="16.500" y="5" width="3" height="3" fill="#111" stroke="none" /></svg></TaskCell>
        <TaskCell $w={60} $ml={4}><Edge /></TaskCell>
        <TaskCell $w={60} $ml={2}><Folder /></TaskCell>
        <TaskCell $w={60} $ml={2}><Mail /></TaskCell>
        <TaskCell $w={51} $ml={7} $run><VBox /></TaskCell>
        <TaskCell $w={51} $ml={11} $run><Octave /></TaskCell>
        <TaskCell $w={51} $ml={11} $run><Chrome /></TaskCell>
        <TaskCell $w={61} $ml={6} $run $act><AppTile><TableauLogo size={24} mono="#4d8eb5" /></AppTile></TaskCell>
        <Tool $w={29} $ml={389}><Moon /></Tool>
        <TrayText $ml={10} $w={36}>27°C</TrayText>
        <TrayText $ml={12} $w={41}>Clear</TrayText>
        <Tool $w={17} $ml={19}><Line w={17} h={9} c="#111" sw={1.200}><path d="M.5 8.500L8.500 1l8 7.500" /></Line></Tool>
        <Tool $w={14} $ml={16}><Line w={14} h={19} c="#222" sw={1}><path d="M1 5h8v9H1zM9 8l4-2v7l-4-2M3 2c1-1 3-1 4 0M3 17c1 1 3 1 4 0" /></Line></Tool>
        <Tool $w={19} $ml={13}>
          <svg width="19" height="19" viewBox="0 0 19 19" fill="none" stroke="#222" strokeWidth="1.200"><rect x=".6" y="2" width="17.800" height="10" /><rect x="2" y="3.500" width="5" height="7" fill="#222" /><circle cx="14" cy="13.500" r="5" fill="#0b8a3c" stroke="none" /><path d="M14 10.500v6" stroke="#fff" /></svg>
        </Tool>
        <Tool $w={16} $ml={12}><Line w={16} h={16} c="#222" sw={1}><path d="M1 15C1 8 7 2 15 1M5 15c0-5 4-9 10-10M9 15c0-3 2-5 5-6" /><circle cx="14" cy="14" r="1.500" fill="#222" /></Line></Tool>
        <Tool $w={20} $ml={12}>
          <svg width="20" height="20" viewBox="0 0 20 20"><rect width="20" height="20" rx="2" fill="#3fa34d" /><text x="10" y="15.500" textAnchor="middle" fontFamily="Lato" fontWeight="900" fontSize="15" fill="#fff">Q</text></svg>
        </Tool>
        <Tool $w={20} $ml={10}>
          <svg width="20" height="22" viewBox="0 0 20 22"><path d="M10 1l9 3v7c0 5-4 8-9 10-5-2-9-5-9-10V4z" fill="#fff" stroke="#111" strokeWidth="1.300" /><path d="M10 1v20M1 10h18" stroke="#111" strokeWidth="1.300" /><path d="M15 13l5 9H10z" fill="#f9c20c" /></svg>
        </Tool>
        <Tool $w={21} $ml={9}><Line w={21} h={17} c="#222" sw={1}><path d="M1 6h3l5-4v13l-5-4H1zM12 6c1 1 1 4 0 5M15 4c2 2 2 7 0 9M18 2c3 3 3 10 0 13" /></Line></Tool>
        <TrayText $ml={13} $w={28} $fs={13.500}>ENG</TrayText>
        <Clock>01:04<br />19-05-2023</Clock>
        <Tool $w={20} $ml={24}><Line w={20} h={20} c="#111" sw={1.200}><path d="M.6.6h18.800v15.800H12.500L10 19l-2.500-2.600H.6z" /></Line></Tool>
      </Taskbar>
    </Page>
  );
}
